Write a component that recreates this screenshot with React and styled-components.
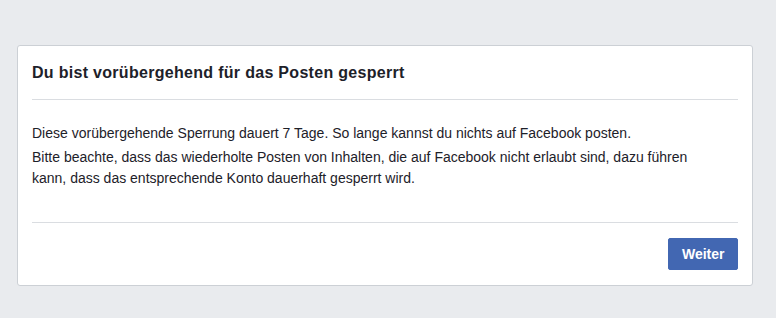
import React from "react";
import styled, { createGlobalStyle } from "styled-components";

const GlobalStyle = createGlobalStyle`
  html, body {
    margin: 0;
    padding: 0;
    background: #e9ebee;
  }
  body {
    font-family: "Liberation Sans", Arial, Helvetica, sans-serif;
    color: #1d2129;
  }
`;

const Page = styled.div`
  width: 776px;
  height: 318px;
  padding: 45px 0 0 17px;
  box-sizing: border-box;
`;

const Dialog = styled.div`
  width: 736px;
  box-sizing: border-box;
  background: #fff;
  border: 1px solid #ccd0d5;
  border-radius: 3px;
  padding: 0 14px;
`;

const Header = styled.div`
  padding: 17px 0 17px;
  border-bottom: 1px solid #dadde1;
`;

const Title = styled.h2`
  margin: 0;
  font-size: 16px;
  line-height: 19px;
  font-weight: bold;
  letter-spacing: 0.3px;
  color: #1d2129;
`;

const Body = styled.div`
  padding: 23px 0 32px;
  border-bottom: 1px solid #dadde1;
`;

const Paragraph = styled.p`
  margin: 0;
  max-width: 688px;
  font-size: 14px;
  line-height: 21.5px;
  color: #1d2129;
  & + & {
    margin-top: 2px;
  }
`;

const Footer = styled.div`
  display: flex;
  justify-content: flex-end;
  padding: 15px 0 15px;
`;

const Button = styled.button`
  height: 32px;
  padding: 0 12.5px;
  background: #4267b2;
  border: 1px solid #4267b2;
  border-radius: 2px;
  color: #fff;
  font-family: "Liberation Sans", Arial, Helvetica, sans-serif;
  font-size: 14px;
  font-weight: bold;
  cursor: pointer;
`;

export default function App() {
  return (
    <>
      <GlobalStyle />
      <Page>
        <Dialog>
          <Header>
            <Title>Du bist vorübergehend für das Posten gesperrt</Title>
          </Header>
          <Body>
            <Paragraph>
              Diese vorübergehende Sperrung dauert 7 Tage. So lange kannst du nichts auf Facebook posten.
            </Paragraph>
            <Paragraph>
              Bitte beachte, dass das wiederholte Posten von Inhalten, die auf Facebook nicht erlaubt sind, dazu führen kann, dass das entsprechende Konto dauerhaft gesperrt wird.
            </Paragraph>
          </Body>
          <Footer>
            <Button>Weiter</Button>
          </Footer>
        </Dialog>
      </Page>
    </>
  );
}
